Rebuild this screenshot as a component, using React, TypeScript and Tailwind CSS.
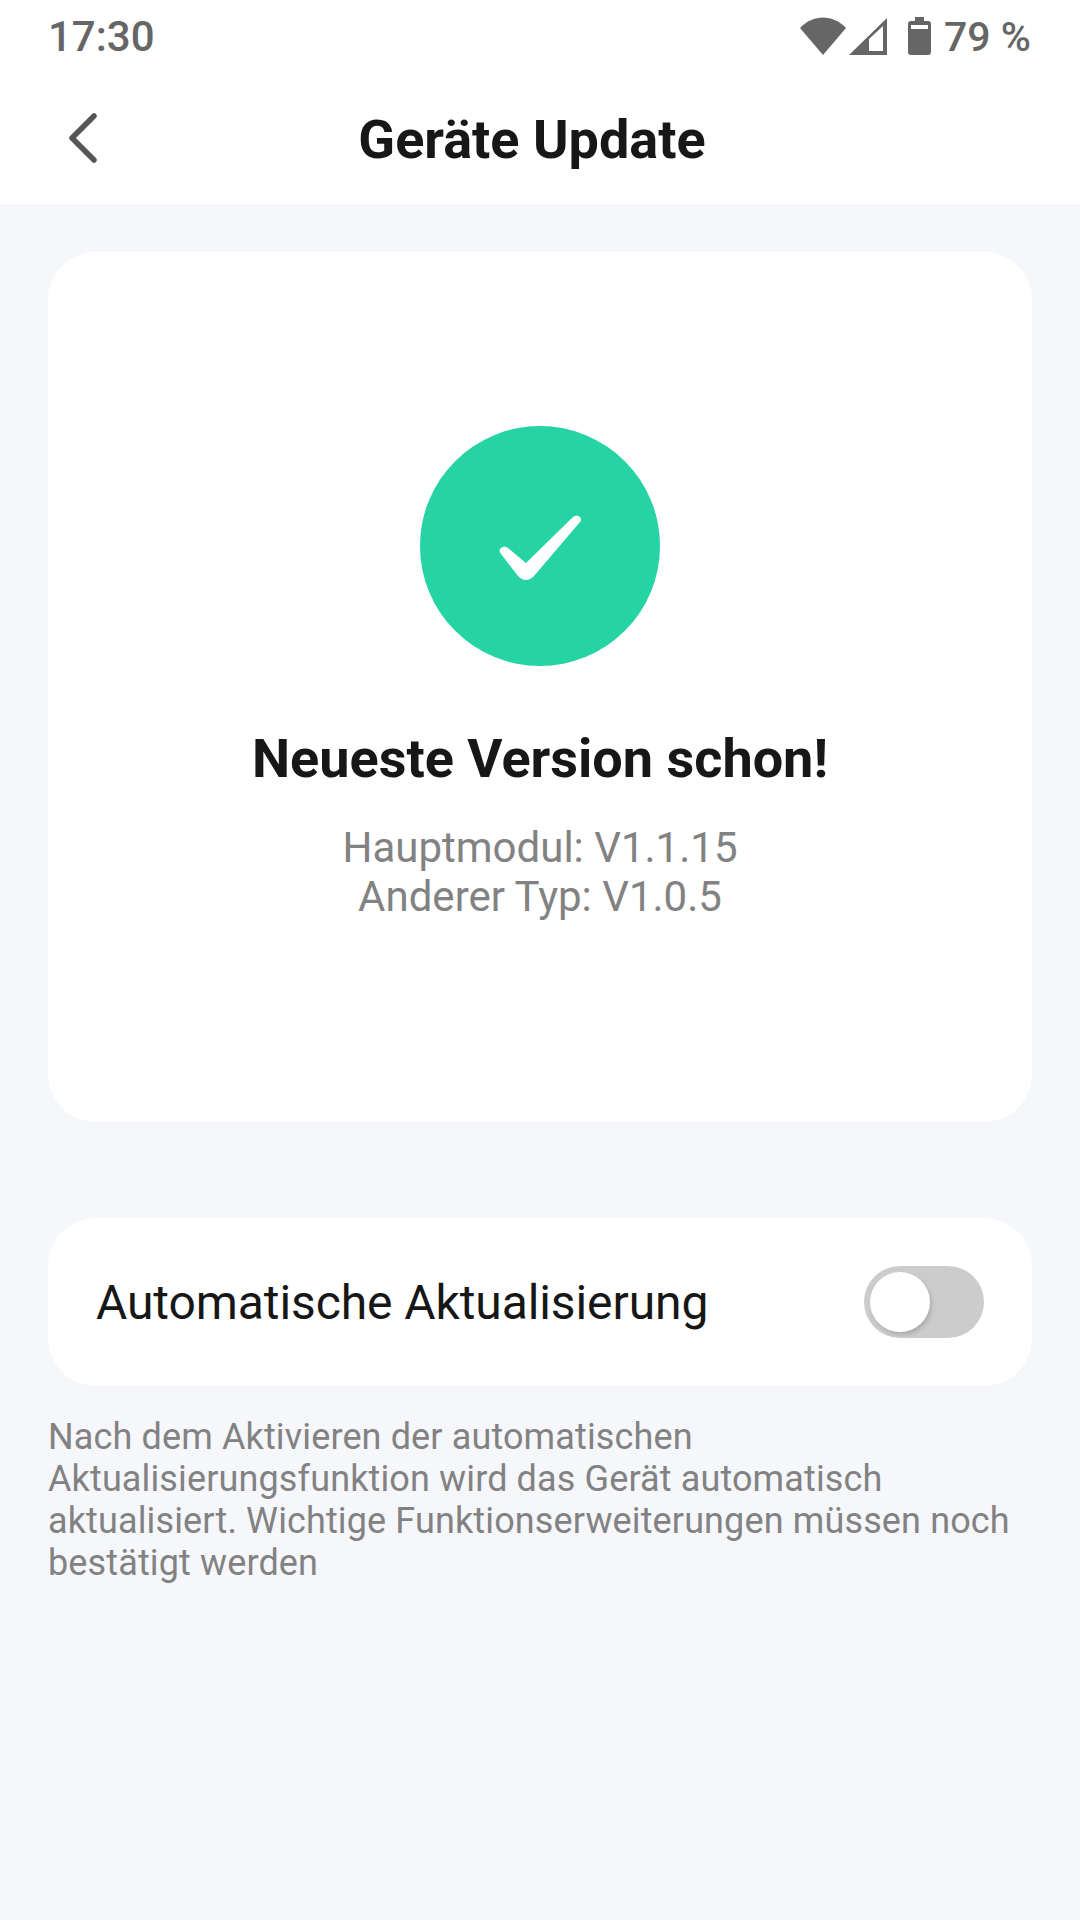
export default function App() {
  const font = { fontFamily: 'Roboto, sans-serif' };

  return (
    <div className="w-[1080px] h-[1920px] bg-[#f6f7fb] flex flex-col overflow-hidden" style={font}>
      {/* Status bar + title */}
      <div className="bg-white h-[204px] flex flex-col">
        <div className="h-[72px] pl-[48px] pr-[49px] flex items-center justify-between text-[#666666] text-[42px] leading-none">
          <span className="relative top-[1px] font-medium">17:30</span>
          <div className="flex items-center">
            <svg width="46" height="38" viewBox="0 0 46 38" className="mr-[3px]">
              <path d="M0 11 C13 -3 33 -3 46 11 L23 38 Z" fill="#666666" />
            </svg>
            <svg width="39" height="38" viewBox="0 0 39 38" className="mr-[20px]">
              <path fillRule="evenodd" d="M0 38 L38 1 L38 38 Z M20 22 L20 34 L34 34 L34 9 Z" fill="#666666" />
            </svg>
            <svg width="23" height="38" viewBox="0 0 23 38" className="mr-[13px]">
              <path fillRule="evenodd" d="M7 0 H16 V4 H20 Q23 4 23 7 V35 Q23 38 20 38 H3 Q0 38 0 35 V7 Q0 4 3 4 H7 Z M3 8 V12 H20 V8 Z" fill="#666666" />
            </svg>
            <span className="relative top-[1px] text-[41px] font-medium">79 %</span>
          </div>
        </div>
        <div className="relative h-[132px] flex items-center justify-center">
          <svg width="32" height="52" viewBox="0 0 32 52" className="absolute left-[67px] top-[40px]">
            <path d="M27 4 L5 26 L27 48" fill="none" stroke="#555555" strokeWidth="5.5" strokeLinecap="round" strokeLinejoin="round" />
          </svg>
          <h1 className="text-[54px] leading-none font-bold text-[#171717] relative top-[2px] right-[8px]">Geräte Update</h1>
        </div>
      </div>

      <div className="px-[48px] pt-[48px] flex flex-col">
        {/* Version card */}
        <div className="bg-white rounded-[48px] h-[870px] pt-[174px] flex flex-col items-center">
          <div className="w-[240px] h-[240px] rounded-full bg-[#26d3a5] flex items-center justify-center">
            <svg width="240" height="240" viewBox="0 0 240 240">
              <path
                d="M153 91 Q157 88 160 91 Q162 94 160 96 L114 150 Q106 158 98 150 L81 128 Q78 124 81 122 Q84 119 88 122 L106 137 Z"
                fill="#ffffff"
              />
            </svg>
          </div>
          <h2 className="mt-[63px] text-[54px] leading-[60px] font-bold text-[#171717]">Neueste Version schon!</h2>
          <div className="mt-[34px] text-[42px] leading-[49px] text-[#828282] text-center">
            <p>Hauptmodul: V1.1.15</p>
            <p>Anderer Typ: V1.0.5</p>
          </div>
        </div>

        {/* Auto update row */}
        <div className="mt-[96px] bg-white rounded-[48px] h-[168px] px-[48px] flex items-center justify-between">
          <span className="relative top-[1px] text-[48px] tracking-[-0.09px] text-[#171717] leading-none">Automatische Aktualisierung</span>
          <div className="w-[120px] h-[72px] rounded-full bg-[#cccccc] p-[6px]">
            <div className="w-[60px] h-[60px] rounded-full bg-white shadow-[2px_3px_4px_rgba(0,0,0,0.15)]" />
          </div>
        </div>

        <p className="mt-[30px] text-[36px] tracking-[0.13px] leading-[42px] text-[#828283]">
          Nach dem Aktivieren der automatischen
          <br />
          Aktualisierungsfunktion wird das Gerät automatisch
          <br />
          aktualisiert. Wichtige Funktionserweiterungen müssen noch
          <br />
          bestätigt werden
        </p>
      </div>
    </div>
  );
}
